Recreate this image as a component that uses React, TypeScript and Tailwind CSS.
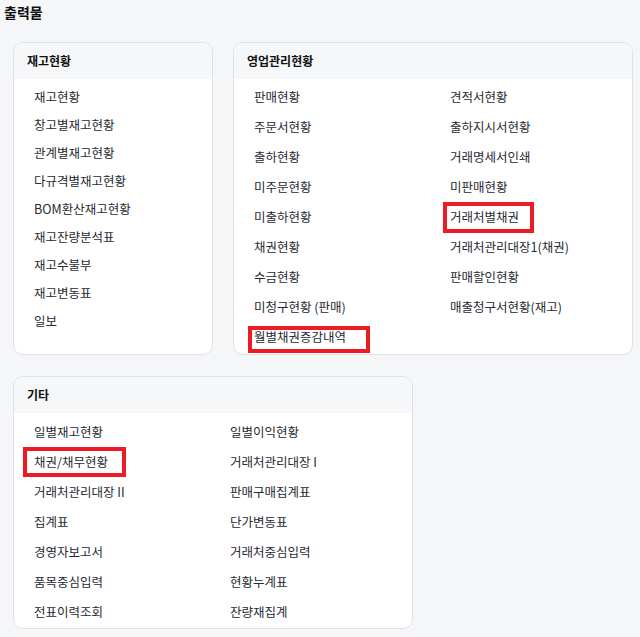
import React from 'react';

type Mark = { left: number; top: number; width: number; height: number };
type Item = { label: string; mark?: Mark };

const stock: Item[] = [
  { label: '재고현황' },
  { label: '창고별재고현황' },
  { label: '관계별재고현황' },
  { label: '다규격별재고현황' },
  { label: 'BOM환산재고현황' },
  { label: '재고잔량분석표' },
  { label: '재고수불부' },
  { label: '재고변동표' },
  { label: '일보' },
];

const sales: Item[] = [
  { label: '판매현황' },
  { label: '견적서현황' },
  { label: '주문서현황' },
  { label: '출하지시서현황' },
  { label: '출하현황' },
  { label: '거래명세서인쇄' },
  { label: '미주문현황' },
  { label: '미판매현황' },
  { label: '미출하현황' },
  { label: '거래처별채권', mark: { left: -7, top: 0, width: 91, height: 31 } },
  { label: '채권현황' },
  { label: '거래처관리대장1(채권)' },
  { label: '수금현황' },
  { label: '판매할인현황' },
  { label: '미청구현황 (판매)' },
  { label: '매출청구서현황(재고)' },
  { label: '월별채권증감내역', mark: { left: -6, top: 4, width: 122, height: 27 } },
];

const etc: Item[] = [
  { label: '일별재고현황' },
  { label: '일별이익현황' },
  { label: '채권/채무현황', mark: { left: -11, top: 0, width: 103, height: 30 } },
  { label: '거래처관리대장 I' },
  { label: '거래처관리대장 II' },
  { label: '판매구매집계표' },
  { label: '집계표' },
  { label: '단가변동표' },
  { label: '경영자보고서' },
  { label: '거래처중심입력' },
  { label: '품목중심입력' },
  { label: '현황누계표' },
  { label: '전표이력조회' },
  { label: '잔량재집계' },
];

const Row: React.FC<{ item: Item; tall?: boolean }> = ({ item, tall }) => (
  <div className={`relative flex items-center ${tall ? 'h-[30px]' : 'h-[28px]'}`}>
    <span className="text-[12.5px] text-[#262a31] whitespace-nowrap cursor-pointer hover:underline">
      {item.label}
    </span>
    {item.mark && (
      <div
        className="absolute border-[4px] border-[#ed1c24] pointer-events-none"
        style={{
          left: item.mark.left,
          top: item.mark.top,
          width: item.mark.width,
          height: item.mark.height,
        }}
      />
    )}
  </div>
);

const Card: React.FC<{ title: string; className: string; children: React.ReactNode }> = ({
  title,
  className,
  children,
}) => (
  <div className={`bg-white border border-[#dfe1e6] rounded-[10px] overflow-hidden ${className}`}>
    <div className="h-[36px] flex items-center pl-[13px] bg-[#f6f7f9] text-[12px] font-bold text-[#111]">
      {title}
    </div>
    {children}
  </div>
);

export default function App() {
  return (
    <div
      className="w-[640px] h-[637px] overflow-hidden bg-[#f5f6f8]"
      style={{ fontFamily: '"Noto Sans CJK KR", "Noto Sans", sans-serif' }}
    >
      <div className="h-[25px] flex items-center pl-[4px] text-[14px] font-bold text-[#111]">출력물</div>

      <div className="mt-[17px] pl-[13px] flex flex-col gap-[21px]">
        <div className="flex gap-[20px] items-stretch">
          <Card title="재고현황" className="w-[200px]">
            <div className="pl-[20px] pt-[4px]">
              {stock.map((it) => (
                <Row key={it.label} item={it} />
              ))}
            </div>
          </Card>

          <Card title="영업관리현황" className="w-[400px]">
            <div className="grid grid-cols-[196px_1fr] pl-[20px] pt-[3px] pb-[2px]">
              {sales.map((it) => (
                <Row key={it.label} item={it} tall />
              ))}
            </div>
          </Card>
        </div>

        <Card title="기타" className="w-[400px]">
          <div className="grid grid-cols-[196px_1fr] pl-[20px] pt-[4px] pb-[1px]">
            {etc.map((it) => (
              <Row key={it.label} item={it} tall />
            ))}
          </div>
        </Card>
      </div>
    </div>
  );
}
